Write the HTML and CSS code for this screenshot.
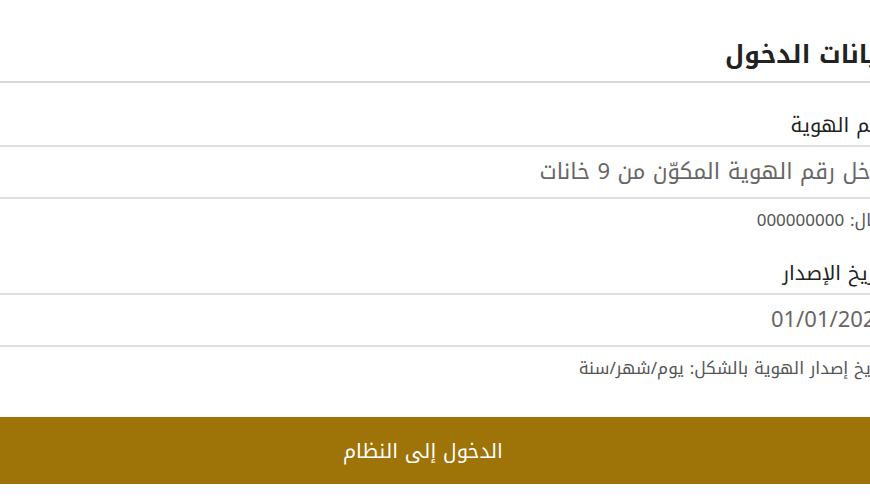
FILE: index.html
```html
<!DOCTYPE html>
<html lang="ar" dir="rtl">
  <head>
    <meta charset="UTF-8" />
    <meta name="viewport" content="width=device-width, initial-scale=1.0" />
    <title>بيانات الدخول</title>
    <link rel="stylesheet" href="styles.css">
  </head>
  <body>
    <form class="login">
      <h2 class="title">بيانات الدخول</h2>

      <div class="field">
        <label class="label" for="idnum">رقم الهوية</label>
        <input class="input" id="idnum" type="text" placeholder="أدخل رقم الهوية المكوّن من 9 خانات">
        <p class="hint">مثال: 000000000</p>
      </div>

      <div class="field">
        <label class="label" for="issue">تاريخ الإصدار</label>
        <input class="input date" id="issue" type="text" placeholder="01/01/2024">
        <p class="hint">تاريخ إصدار الهوية بالشكل: يوم/شهر/سنة</p>
      </div>

      <button class="submit" type="button">الدخول إلى النظام</button>
    </form>
  </body>
</html>
```

FILE: styles.css
```css
* { box-sizing: border-box; font-family: 'Noto Kufi Arabic', 'Noto Sans Arabic', 'Noto Sans', 'DejaVu Sans', sans-serif; }
body { margin: 0; background: #fff; color: #222; overflow: hidden; }

.login { margin-right: -18px; margin-left: -42px; padding-top: 40px; }

.title {
  margin: 0;
  padding: 0 0 11px;
  font-size: 25px;
  line-height: 30px;
  font-weight: bold;
  border-bottom: 2px solid #d9d9d9;
}

.field { display: flex; flex-direction: column; }

.label {
  padding: 30px 0 8px;
  font-size: 20px;
  line-height: 24px;
  border-bottom: 2px solid #dde1e6;
}

.input {
  border: none;
  border-bottom: 2px solid #dde1e6;
  height: 52px;
  padding: 0;
  font-size: 22px;
  background: transparent;
  color: #555;
}
.input::placeholder { color: #666; }

.hint { margin: 0; padding: 11px 0 0; height: 32px; font-size: 17px; line-height: 20px; color: #555; }

.submit {
  display: block;
  width: 100%;
  margin-top: 38px;
  height: 67px;
  border: none;
  background: #9e7308;
  color: #fff;
  font-size: 20px;
}
```
